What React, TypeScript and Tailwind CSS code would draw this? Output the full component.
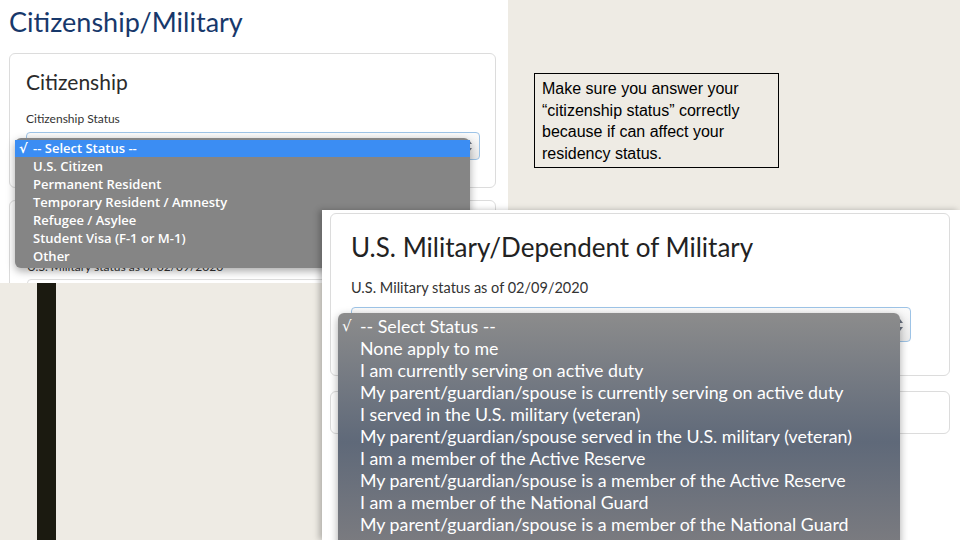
import React from "react";

const citizenOptions = [
  "U.S. Citizen",
  "Permanent Resident",
  "Temporary Resident / Amnesty",
  "Refugee / Asylee",
  "Student Visa (F-1 or M-1)",
  "Other",
];

const militaryOptions = [
  "None apply to me",
  "I am currently serving on active duty",
  "My parent/guardian/spouse is currently serving on active duty",
  "I served in the U.S. military (veteran)",
  "My parent/guardian/spouse served in the U.S. military (veteran)",
  "I am a member of the Active Reserve",
  "My parent/guardian/spouse is a member of the Active Reserve",
  "I am a member of the National Guard",
  "My parent/guardian/spouse is a member of the National Guard",
];

function SelectArrows() {
  return (
    <svg width="8" height="14" viewBox="0 0 8 14" className="text-gray-500">
      <path d="M1 5 L4 1 L7 5 Z" fill="currentColor" />
      <path d="M1 9 L4 13 L7 9 Z" fill="currentColor" />
    </svg>
  );
}

function CitizenshipShot() {
  return (
    <div className="absolute left-0 top-0 w-[508px] h-[283px] bg-white overflow-hidden font-['Lato',sans-serif]">
      <h1 className="pl-[9px] pt-[5px] text-[27px] leading-[33px] text-[#17386b]">Citizenship/Military</h1>
      <div className="ml-[9px] mt-[15px] w-[487px] h-[135px] border border-[#dcdcdc] rounded-md pl-[16px] pt-[14px]">
        <h2 className="text-[21px] leading-[28px] text-[#2b2b2b]">Citizenship</h2>
        <p className="mt-[15px] text-[12px] leading-[16px] text-[#333]">Citizenship Status</p>
        <div className="mt-[5px] w-[454px] h-[28px] rounded border border-[#9dc3e6] bg-gradient-to-b from-[#fbfbfb] to-[#e9e9e9] flex items-center justify-end pr-[6px]">
          <SelectArrows />
        </div>
      </div>
      <div className="ml-[9px] mt-[12px] w-[487px] h-[100px] border border-[#dcdcdc] rounded-md pl-[17px] pt-[58px]">
        <p className="text-[12px] leading-[16px] text-[#333]">U.S. Military status as of 02/09/2020</p>
        <div className="mt-[4px] w-[454px] h-[28px] rounded border border-[#dcdcdc]" />
      </div>

      <div className="absolute left-[15px] top-[138px] w-[455px] h-[130px] rounded-md bg-[#858585] shadow-[0_3px_8px_rgba(0,0,0,0.35)] pt-[2px] text-white text-[13px] font-semibold font-['Open_Sans',sans-serif]">
        <div className="h-[17px] leading-[17px] bg-[#3b8df3] flex pl-[4px]">
          <span className="w-[14px] font-['DejaVu_Sans',sans-serif]">√</span>
          <span>-- Select Status --</span>
        </div>
        {citizenOptions.map((o) => (
          <div key={o} className="h-[18px] leading-[18px] pl-[18px]">
            {o}
          </div>
        ))}
      </div>
    </div>
  );
}

function MilitaryShot() {
  return (
    <div className="absolute left-[322px] top-[210px] w-[638px] h-[330px] bg-white overflow-hidden shadow-[-3px_0_6px_rgba(0,0,0,0.25)] font-['Lato',sans-serif]">
      <div className="ml-[8px] mt-[3px] w-[620px] h-[163px] border border-[#dcdcdc] rounded-md pl-[20px] pt-[17px]">
        <h2 className="text-[26px] leading-[33px] text-[#222]">U.S. Military/Dependent of Military</h2>
        <p className="mt-[15px] text-[14.5px] leading-[18px] text-[#333]">U.S. Military status as of 02/09/2020</p>
        <div className="mt-[10px] w-[560px] h-[35px] rounded border border-[#9dc3e6] bg-gradient-to-b from-[#fbfbfb] to-[#e9e9e9] flex items-center justify-end pr-[6px]">
          <SelectArrows />
        </div>
      </div>
      <div className="ml-[8px] mt-[15px] w-[620px] h-[43px] border border-[#dcdcdc] rounded-md" />

      <div className="absolute left-[16px] top-[103px] w-[562px] h-[235px] rounded-md bg-gradient-to-b from-[#8c8c8c] via-[#5f6979] via-55% to-[#7c7c80] shadow-[0_3px_8px_rgba(0,0,0,0.35)] pt-[2px] text-white text-[17.8px] font-['Lato',sans-serif]">
        <div className="h-[22px] leading-[22px] flex pl-[4px]">
          <span className="w-[18px] text-[15px] font-['DejaVu_Sans',sans-serif]">√</span>
          <span>-- Select Status --</span>
        </div>
        {militaryOptions.map((o) => (
          <div key={o} className="h-[22px] leading-[22px] pl-[22px]">
            {o}
          </div>
        ))}
      </div>
    </div>
  );
}

export default function App() {
  return (
    <div className="relative w-[960px] h-[540px] overflow-hidden bg-[#eeebe4]">
      <div className="absolute left-[37px] top-[283px] w-[19px] h-[257px] bg-[#1b1a10]" />
      <CitizenshipShot />
      <div className="absolute left-[534px] top-[73px] w-[245px] h-[95px] border border-black pl-[7px] pt-[4px] font-['Liberation_Sans',sans-serif] text-[16px] leading-[21.5px] text-black">
        Make sure you answer your “citizenship status” correctly because if can affect your residency status.
      </div>
      <MilitaryShot />
    </div>
  );
}
